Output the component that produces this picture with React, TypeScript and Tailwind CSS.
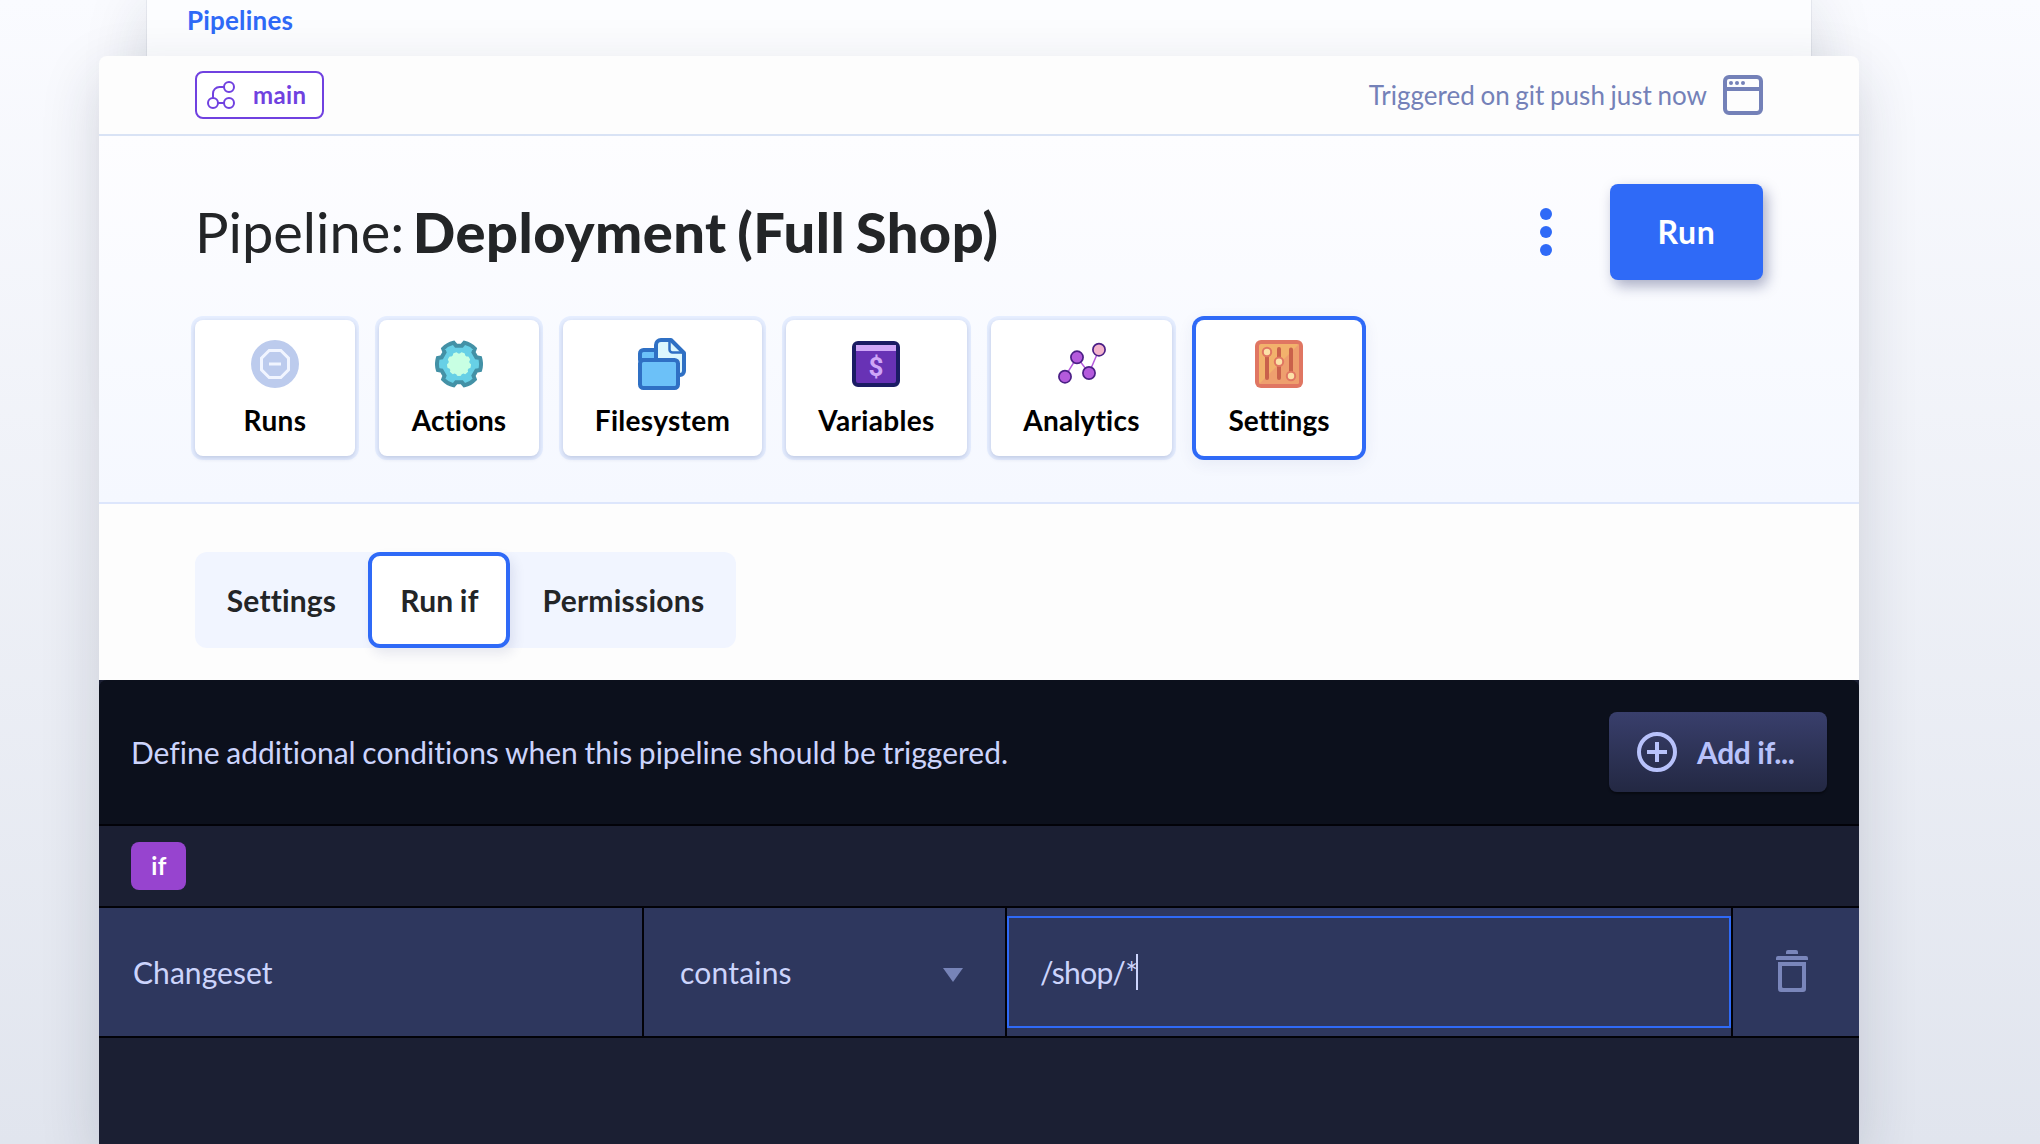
import type { ReactNode } from "react";

/** Closed outline of a cog: flat notches between rounded teeth. */
function cogPath(c: number, outer: number, inner: number, notches: number, top: number, floor: number) {
  const at = (r: number, deg: number) => {
    const a = (deg * Math.PI) / 180;
    return `${(c + r * Math.cos(a)).toFixed(2)} ${(c + r * Math.sin(a)).toFixed(2)}`;
  };
  let d = "";
  for (let i = 0; i < notches; i++) {
    const t = -90 + (i * 360) / notches;
    d += `${i === 0 ? "M" : `A${outer} ${outer} 0 0 1 `}${at(outer, t - top)}`;
    d += `L${at(inner, t - floor)}L${at(inner, t + floor)}L${at(outer, t + top)}`;
  }
  return `${d}A${outer} ${outer} 0 0 1 ${at(outer, -90 - top)}Z`;
}

const RunsIcon = () => (
  <svg width="48" height="48" viewBox="0 0 48 48" fill="none">
    <circle cx="24" cy="24" r="24" fill="#bccbed" />
    <path d="M18.2 10.5h11.6l7.7 7.7v11.6l-7.7 7.7H18.2l-7.7-7.7V18.2z" stroke="#f1f5ff" strokeWidth="3" />
    <path d="M18 24h12" stroke="#f1f5ff" strokeWidth="3" />
  </svg>
);

const ActionsIcon = () => (
  <svg width="48" height="48" viewBox="0 0 48 48">
    <path d={cogPath(24, 22, 18.6, 6, 14, 9)} fill="#67d0e6" stroke="#4391a6" strokeWidth="4" />
    <path d={cogPath(24, 12, 10.6, 9, 11, 5)} fill="#c8ffe3" />
  </svg>
);

const FilesystemIcon = () => (
  <svg width="48" height="52" viewBox="0 0 48 52" strokeLinejoin="round" className="-my-0.5 mr-px">
    <path d="M2 22V15.500a3.500 3.500 0 0 1 3.500-3.500H20v10z" fill="#6cc1f8" stroke="#2f70c4" strokeWidth="4" />
    <path d="M18 22V7a5 5 0 0 1 5-5h10l13 13v18a4 4 0 0 1-4 4H18z" fill="#dcf7fd" stroke="#2f70c4" strokeWidth="4" />
    <path d="M31.500 3v8.500a3 3 0 0 0 3 3H45" fill="none" stroke="#2f70c4" strokeWidth="2.500" />
    <rect x="2" y="22" width="38" height="28" rx="3.500" fill="#6cc1f8" stroke="#2f70c4" strokeWidth="4" />
  </svg>
);

const VariablesIcon = () => (
  <div className="my-px mr-px flex h-[46px] w-12 flex-col rounded-md border-4 border-[#1b1c64] bg-[#6832b5]">
    <div className="h-[6px] bg-[#cfa6f7]" />
    <div className="flex flex-1 items-center justify-center font-['Roboto'] text-[26px] leading-none font-bold text-[#cfa6f7]">$</div>
  </div>
);

const AnalyticsIcon = () => (
  <svg width="48" height="48" viewBox="0 0 48 48">
    <path d="M7 36.700L19 17.300L31 33L41 9.700" fill="none" stroke="#b45adc" strokeWidth="1.500" />
    <g fill="#b45adc" stroke="#4b1f86" strokeWidth="1.700">
      <circle cx="7" cy="36.700" r="6.100" />
      <circle cx="19" cy="17.300" r="6.100" />
      <circle cx="31" cy="33" r="6.100" />
      <circle cx="41" cy="9.700" r="6.100" fill="#f3b3cc" />
    </g>
  </svg>
);

const SettingsIcon = () => (
  <svg width="48" height="48" viewBox="0 0 48 48">
    <rect width="48" height="48" rx="6" fill="#e07662" />
    <rect x="4" y="4" width="40" height="40" rx="2" fill="#f2b26c" />
    <path d="M44 4v38a2 2 0 0 1-2 2H4z" fill="#ee9f6e" />
    <path d="M12 12v26M24 9v29M36 9.500v27" stroke="#c9614b" strokeWidth="4" strokeLinecap="round" />
    <g fill="#fce1a8" stroke="#e07662" strokeWidth="2">
      <circle cx="12" cy="12" r="4.200" />
      <circle cx="24" cy="21.800" r="4.200" />
      <circle cx="36" cy="36" r="4.200" />
    </g>
  </svg>
);

const BranchIcon = () => (
  <svg width="28" height="28" viewBox="0 0 28 28" fill="none" stroke="#7041e0" strokeWidth="2">
    <circle cx="6" cy="22" r="5" />
    <circle cx="22" cy="22" r="5" />
    <circle cx="22" cy="6" r="5" />
    <path d="M11 22h6M6 17v-4.500A6.500 6.500 0 0 1 12.500 6H17" />
  </svg>
);

const WindowIcon = () => (
  <svg width="40" height="40" viewBox="0 0 40 40" fill="none" stroke="#7481b8" strokeWidth="4">
    <rect x="2" y="2" width="36" height="36" rx="4" />
    <path d="M2 14h36" />
    <g fill="#7481b8" stroke="none">
      <circle cx="8" cy="8" r="2" />
      <circle cx="14" cy="8" r="2" />
      <circle cx="20" cy="8" r="2" />
    </g>
  </svg>
);

const PlusCircleIcon = () => (
  <svg width="40" height="40" viewBox="0 0 40 40" fill="none" stroke="#b8c2fb" strokeWidth="4">
    <circle cx="20" cy="20" r="18" />
    <path d="M20 10v20M10 20h20" />
  </svg>
);

const TrashIcon = () => (
  <svg width="32" height="42" viewBox="0 0 32 42" fill="#7a86bb">
    <path d="M12 0h8a2 2 0 0 1 2 2v2H10V2a2 2 0 0 1 2-2zM2 6h28a2 2 0 0 1 2 2v2H0V8a2 2 0 0 1 2-2z" />
    <path fillRule="evenodd" d="M2 12h28v27a3 3 0 0 1-3 3H5a3 3 0 0 1-3-3zM6 16v20.500a1.500 1.500 0 0 0 1.500 1.500h17a1.500 1.500 0 0 0 1.500-1.500V16z" />
  </svg>
);

type Card = { label: string; icon: ReactNode; size: string; active?: boolean };

const cards: Card[] = [
  { label: "Runs", icon: <RunsIcon />, size: "w-40 tracking-[0.4px]" },
  { label: "Actions", icon: <ActionsIcon />, size: "w-40" },
  { label: "Filesystem", icon: <FilesystemIcon />, size: "w-[199px] tracking-[0.3px]" },
  { label: "Variables", icon: <VariablesIcon />, size: "w-[181px] tracking-[0.33px]" },
  { label: "Analytics", icon: <AnalyticsIcon />, size: "w-[181px] tracking-[0.2px]" },
  { label: "Settings", icon: <SettingsIcon />, size: "w-[166px]", active: true },
];

function NavCard({ label, icon, size, active }: Card) {
  const ring = active
    ? "shadow-[0_0_0_4px_#2f6af7,0_4px_16px_4px_rgba(40,60,130,0.07)]"
    : "shadow-[0_2px_5px_rgba(30,50,110,0.2),0_0_0_4px_#e6eeff]";
  return (
    <button className={`flex h-[136px] flex-col items-center rounded-lg bg-white pt-5 ${size} ${ring}`}>
      {icon}
      <span className="mt-[15px] text-[28px] leading-[34px] font-bold text-black">{label}</span>
    </button>
  );
}

export default function App() {
  return (
    <div className="h-[1144px] w-[2040px] overflow-hidden bg-linear-to-b from-[#fafbff] to-[#e1e5ee] font-['Lato',sans-serif] [font-variant-ligatures:none]">
      <div className="ml-[147px] h-[400px] w-[1664px] bg-[#fcfdff] pl-[40px] text-[26px] leading-10 font-bold tracking-[0.2px] text-[#2f6af7] shadow-[0_0_1px_rgba(30,40,80,0.35),0_8px_60px_rgba(30,40,60,0.15)]">
        Pipelines
      </div>

      <main className="relative -mt-[344px] ml-[99px] flex h-[1088px] w-[1760px] flex-col rounded-t-lg bg-[#fdfdfd] shadow-[0_20px_60px_rgba(30,40,60,0.16)]">
        <header className="flex h-20 shrink-0 items-center justify-between border-b-2 border-[#d9e3f5] px-24">
          <div className="flex h-12 w-[129px] items-center rounded-lg border-2 border-[#7041e0] bg-white pl-[10px]">
            <BranchIcon />
            <span className="ml-[18px] text-2xl leading-none font-bold tracking-[0.4px] text-[#7041e0]">main</span>
          </div>
          <div className="flex items-center gap-4 text-[#7481b8]">
            <span className="text-[26px] leading-none [word-spacing:-1px]">Triggered on git push just now</span>
            <WindowIcon />
          </div>
        </header>

        <section className="h-[368px] shrink-0 border-b-2 border-[#dde6fc] bg-linear-to-b from-[#fdfdff] to-[#f5f8ff] px-24 pt-12">
          <div className="flex h-24 items-center">
            <h1 className="flex flex-1 text-[56px] leading-none text-[#232527]">
              <span>Pipeline:</span>
              <span className="ml-[8.5px] font-black tracking-[0.45px] [word-spacing:-3.1px]">Deployment (Full Shop)</span>
            </h1>
            <button className="mr-[58px] flex flex-col gap-[6px]">
              <i className="size-3 rounded-full bg-[#2f6af7]" />
              <i className="size-3 rounded-full bg-[#2f6af7]" />
              <i className="size-3 rounded-full bg-[#2f6af7]" />
            </button>
            <button className="h-24 w-[153px] rounded-lg bg-[#2f6af7] pb-px text-[32px] leading-none font-bold tracking-[0.6px] text-white shadow-[4px_6px_14px_rgba(20,30,90,0.35)]">
              Run
            </button>
          </div>
          <nav className="mt-10 flex gap-6">
            {cards.map((card) => (
              <NavCard key={card.label} {...card} />
            ))}
          </nav>
        </section>

        <section className="h-44 shrink-0 px-24 pt-12">
          <div className="flex h-24 w-[541px] items-stretch rounded-xl bg-[#f1f5ff] text-[30px] leading-none font-bold text-[#232527]">
            <button className="w-[173px] tracking-[0.15px]">Settings</button>
            <button className="w-[142px] rounded-xl border-4 border-[#2f6af7] bg-white pl-px tracking-[0.25px] shadow-[4px_6px_12px_rgba(40,50,120,0.1)] [word-spacing:-1.2px]">Run if</button>
            <button className="w-[226px] pl-px tracking-[0.25px]">Permissions</button>
          </div>
        </section>

        <section className="flex-1 bg-[#1b1f33] text-[30px] leading-none text-[#ccd4fc]">
          <div className="flex h-[146px] items-center justify-between rounded-t-lg border-b-2 border-[#020208] bg-[#0c101c] px-8">
            <p className="[word-spacing:-1px]">Define additional conditions when this pipeline should be triggered.</p>
            <button className="flex h-20 w-[218px] items-center rounded-lg bg-linear-to-b from-[#393f6c] to-[#232843] pl-7 font-bold text-[#b8c2fb] shadow-[0_2px_2px_rgba(0,0,0,0.4)]">
              <PlusCircleIcon />
              <span className="ml-5 tracking-[-0.38px]">Add if...</span>
            </button>
          </div>

          <div className="flex h-[82px] items-center border-b-2 border-[#020208] px-8">
            <span className="flex h-12 w-[55px] items-center justify-center rounded-lg bg-[#9744cf] pl-px text-2xl leading-none font-bold tracking-[0.3px] text-white">if</span>
          </div>

          <div className="flex h-[130px] border-b-2 border-[#020208] bg-[#2e375e]">
            <div className="flex w-[545px] items-center border-r-2 border-[#020208] pl-[34px] tracking-[0.05px]">Changeset</div>
            <div className="flex w-[363px] items-center justify-between border-r-2 border-[#020208] pr-[42px] pl-[36px] tracking-[0.2px]">
              contains
              <svg width="20" height="14" viewBox="0 0 20 14" className="mt-1.5">
                <path d="M0 0h20L10 14z" fill="#7784b8" />
              </svg>
            </div>
            <div className="flex w-[726px] items-center border-r-2 border-[#020208]">
              <div className="flex h-28 w-full items-center border-2 border-[#2f6af7] pl-[31px]">
                <span className="w-24 tracking-[-0.68px] whitespace-nowrap">/shop/*</span>
                <span className="h-9 w-0.5 bg-[#ccd4fc]" />
              </div>
            </div>
            <div className="flex w-[126px] items-center pb-0.5 pl-[43px]">
              <TrashIcon />
            </div>
          </div>
        </section>
      </main>
    </div>
  );
}
